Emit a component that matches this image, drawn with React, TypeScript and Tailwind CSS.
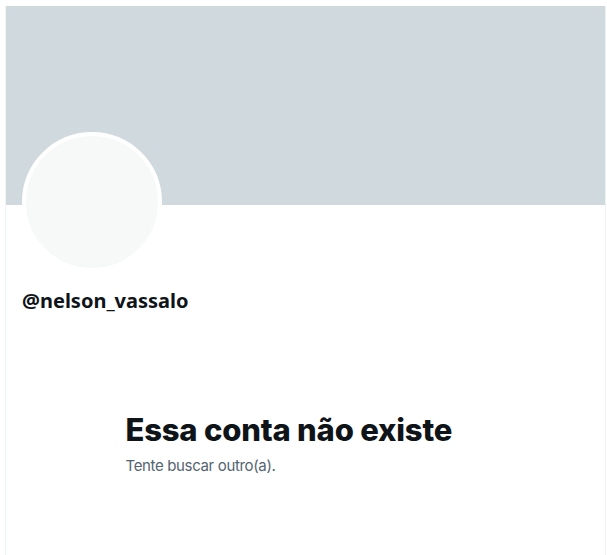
export default function App() {
  return (
    <div className="min-h-[555px] w-[607px] bg-white pt-[6px]">
      <div className="ml-[5px] flex min-h-[549px] w-[601px] flex-col border-x border-[#eff3f4]">
        {/* banner */}
        <div className="h-[199px] w-full bg-[#cfd9de]" />

        {/* avatar + handle */}
        <div className="px-4">
          <div className="-mt-[73px] h-[140px] w-[140px] rounded-full border-4 border-white bg-[#f7f9f9]" />
          <div
            className="mt-[17px] text-[20px] leading-6 font-bold text-[#0f1419]"
            style={{ fontFamily: '"Noto Sans", sans-serif' }}
          >
            @nelson_vassalo
          </div>
        </div>

        {/* empty state */}
        <div
          className="mx-auto mt-[99px] w-full max-w-[400px] px-5"
          style={{ fontFamily: 'Inter, "Noto Sans", sans-serif' }}
        >
          <div className="text-[31px] leading-9 font-extrabold tracking-[-0.2px] text-[#0f1419]">
            Essa conta não existe
          </div>
          <div className="mt-2 text-[15px] leading-5 tracking-[-0.35px] text-[#536471]">Tente buscar outro(a).</div>
        </div>
      </div>
    </div>
  );
}
